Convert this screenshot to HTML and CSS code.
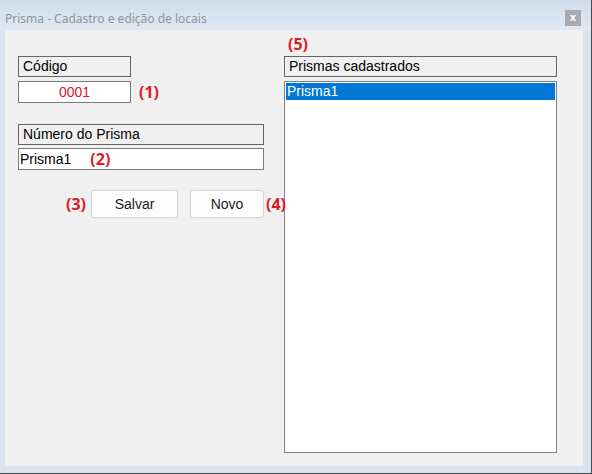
FILE: index.html
```html
<!DOCTYPE html>
<html lang="pt">
<head>
<meta charset="utf-8">
<title>Prisma - Cadastro e edição de locais</title>
<link rel="stylesheet" href="styles.css">
</head>
<body>
<div class="window">
  <div class="titlebar">
    <span class="title">Prisma - Cadastro e edição de locais</span>
    <span class="close">x</span>
  </div>
  <div class="client">
    <div class="left">
      <div class="field-label codigo-w">Código</div>
      <div class="row">
        <div class="input codigo-w code">0001</div>
        <span class="mark m1">(1)</span>
      </div>
      <div class="field-label numero-w gap-top">Número do Prisma</div>
      <div class="input numero-w name">Prisma1 <span class="mark m2">(2)</span></div>
      <div class="buttons">
        <span class="mark m3">(3)</span>
        <button class="btn salvar">Salvar</button>
        <button class="btn novo">Novo</button>
        <span class="mark m4">(4)</span>
      </div>
    </div>
    <div class="right">
      <span class="mark m5">(5)</span>
      <div class="field-label list-w">Prismas cadastrados</div>
      <div class="listbox list-w">
        <div class="item selected">Prisma1</div>
      </div>
    </div>
  </div>
</div>
</body>
</html>
```
FILE: styles.css
```css
* { box-sizing: border-box; }
html, body { margin: 0; padding: 0; }
body { width: 592px; height: 474px; overflow: hidden; background: #dbe5f1; }

.window {
  width: 592px;
  height: 474px;
  background: #d9e4f1;
  border-right: 1px solid #4a4a4a;
  border-bottom: 1px solid #4a4a4a;
  display: flex;
  flex-direction: column;
}

.titlebar {
  height: 30px;
  flex: none;
  background: linear-gradient(#d1ddeb, #dfe8f3);
  display: flex;
  align-items: center;
  padding: 0 0 0 5px;
  position: relative;
}
.title {
  font-family: "Noto Sans", "Open Sans", sans-serif;
  font-size: 12px;
  color: #8f959c;
  padding-top: 6px;
}
.close {
  position: absolute;
  left: 565px;
  top: 10px;
  width: 16px;
  height: 16px;
  background: #a6abb1;
  color: #ffffff;
  font-family: "DejaVu Sans", sans-serif;
  font-weight: bold;
  font-size: 10px;
  line-height: 15px;
  text-align: center;
}

.client {
  margin-left: 5px;
  width: 578px;
  height: 436px;
  background: #f0f0f0;
  display: flex;
  padding: 26px 0 0 13px;
  font-family: "Liberation Sans", Arial, sans-serif;
  font-size: 14px;
  color: #000;
}

.left { width: 266px; flex: none; position: relative; z-index: 1; }
.right { display: flex; flex-direction: column; position: relative; }

.field-label {
  height: 21px;
  border: 1px solid #646464;
  background: #f0f0f0;
  padding: 0 0 0 4px;
  line-height: 19px;
}
.codigo-w { width: 113px; }
.numero-w { width: 246px; }
.list-w { width: 273px; }
.gap-top { margin-top: 21px; }

.row { display: flex; align-items: center; margin-top: 4px; }

.input {
  height: 22px;
  border: 1px solid #7a7a7a;
  background: #ffffff;
  line-height: 20px;
}
.code { text-align: center; color: #e0141e; }
.name { margin-top: 3px; padding-left: 1px; display: flex; align-items: center; }

.mark {
  font-family: "Open Sans", "Noto Sans", sans-serif;
  font-weight: bold;
  font-size: 16px;
  color: #dc1c24;
  line-height: 20px;
  flex: none;
}
.m1 { margin-left: 8px; }
.m2 { margin-left: 19px; }
.m3 { display: inline-block; width: 20px; }

.buttons {
  display: flex;
  align-items: center;
  margin-top: 20px;
  margin-left: 48px;
  width: 260px;
}
.btn {
  flex: none;
  height: 28px;
  border: 1px solid #d4d4d4;
  border-radius: 3px;
  background: #fdfdfd;
  font-family: "Liberation Sans", Arial, sans-serif;
  font-size: 14px;
  color: #1a1a1a;
  padding: 0;
}
.salvar { width: 87px; margin-left: 5px; }
.novo { width: 74px; margin-left: 12px; }
.m4 { margin-left: 2px; }

.m5 {
  position: absolute;
  left: 4px;
  top: -22px;
}
.listbox {
  margin-top: 4px;
  height: 372px;
  border: 1px solid #828282;
  background: #ffffff;
  padding: 1px;
}
.item {
  height: 17px;
  line-height: 17px;
  padding-left: 1px;
}
.selected { background: #0078d7; color: #ffffff; }
```
